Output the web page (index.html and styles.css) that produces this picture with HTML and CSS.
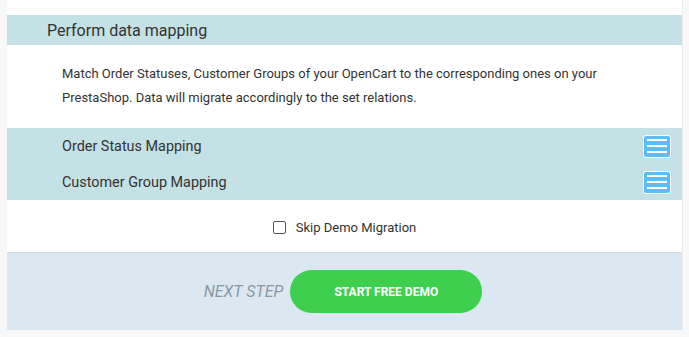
FILE: index.html
```html
<!DOCTYPE html>
<html>
<head>
<meta charset="utf-8">
<link rel="stylesheet" href="styles.css">
</head>
<body>
<div class="page">
  <div class="panel">
    <div class="section-title">Perform data mapping</div>
    <p class="desc">Match Order Statuses, Customer Groups of your OpenCart to the corresponding ones on your<br>PrestaShop. Data will migrate accordingly to the set relations.</p>
    <div class="mappings">
      <div class="map-row">
        <span>Order Status Mapping</span>
        <span class="menu-btn"><svg width="20" height="14" viewBox="0 0 20 14"><rect x="0" y="0" width="20" height="2" fill="#fff"/><rect x="0" y="6" width="20" height="2" fill="#fff"/><rect x="0" y="12" width="20" height="2" fill="#fff"/></svg></span>
      </div>
      <div class="map-row">
        <span>Customer Group Mapping</span>
        <span class="menu-btn"><svg width="20" height="14" viewBox="0 0 20 14"><rect x="0" y="0" width="20" height="2" fill="#fff"/><rect x="0" y="6" width="20" height="2" fill="#fff"/><rect x="0" y="12" width="20" height="2" fill="#fff"/></svg></span>
      </div>
    </div>
    <div class="skip">
      <label class="skip-label"><span class="check"></span>Skip Demo Migration</label>
    </div>
    <div class="footer">
      <span class="next">NEXT STEP</span>
      <span class="start">START FREE DEMO</span>
    </div>
  </div>
</div>
</body>
</html>
```

FILE: styles.css
```css
html, body {
  margin: 0;
  padding: 0;
  background: #f8f8f8;
  font-family: Roboto, "Liberation Sans", sans-serif;
}
.page {
  padding: 0 6px 0 7px;
  height: 337px;
  box-sizing: border-box;
}
.panel {
  background: #fff;
  padding-top: 15px;
  border-right: 1px solid #ececec;
}
.section-title {
  height: 30px;
  line-height: 31px;
  background: #c4e1e5;
  padding-left: 40px;
  font-size: 16px;
  color: #333;
}
.desc {
  margin: 0;
  padding: 17px 0 18px 55px;
  font-size: 13px;
  line-height: 24px;
  color: #333;
}
.mappings {
  background: #c4e1e5;
}
.map-row {
  height: 36px;
  display: flex;
  align-items: center;
  justify-content: space-between;
  padding: 0 11px 0 55px;
  font-size: 14.4px;
  color: #333;
}
.menu-btn {
  width: 26px;
  height: 21px;
  background: #5bbdfa;
  border: 1px solid #fff;
  border-radius: 3px;
  display: flex;
  align-items: center;
  justify-content: center;
}
.skip {
  height: 52px;
  display: flex;
  align-items: center;
  justify-content: center;
  border-bottom: 1px solid #d3dde6;
}
.skip-label {
  display: flex;
  align-items: center;
  font-size: 13px;
  color: #333;
  padding-top: 2px;
}
.check {
  width: 11px;
  height: 11px;
  border: 1px solid #555;
  border-radius: 2px;
  margin-right: 10px;
  background: #fff;
}
.footer {
  background: #dce8f1;
  height: 77px;
  display: flex;
  align-items: center;
  justify-content: center;
  gap: 7px;
  padding-right: 3px;
}
.next {
  font-style: italic;
  font-size: 16px;
  color: #8a98a3;
}
.start {
  width: 192px;
  height: 43px;
  border-radius: 22px;
  background: #3ecf4f;
  color: #fff;
  font-weight: bold;
  font-size: 12px;
  display: flex;
  align-items: center;
  justify-content: center;
}
```
